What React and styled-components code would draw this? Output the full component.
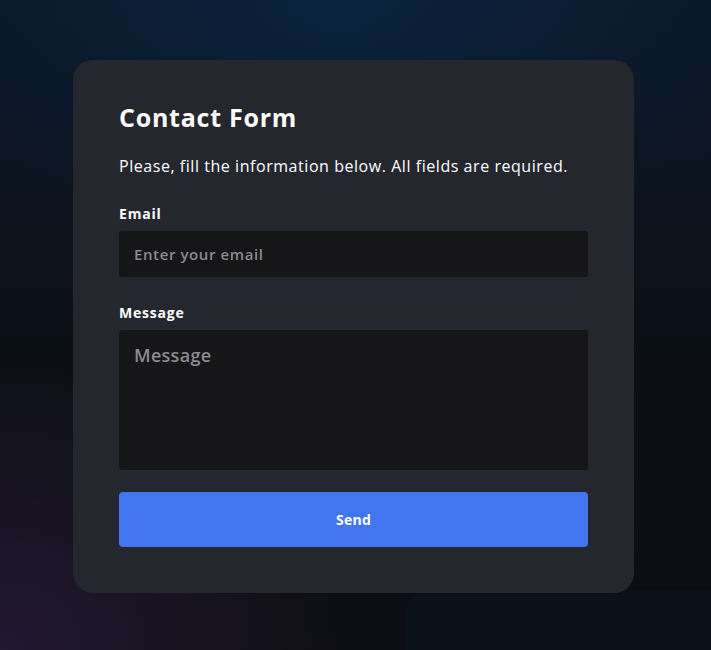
import React from "react";
import styled, { createGlobalStyle } from "styled-components";

const GlobalStyle = createGlobalStyle`
  * { box-sizing: border-box; }
  html, body { margin: 0; padding: 0; }
  body {
    font-family: "Open Sans", "Liberation Sans", sans-serif;
    background: #0c0e14;
  }
`;

const Page = styled.div`
  position: relative;
  min-height: 100vh;
  display: flex;
  align-items: center;
  justify-content: center;
  overflow: hidden;
  background:
    radial-gradient(ellipse 420px 260px at 48% 0%, #0a233d 0%, rgba(10, 35, 61, 0) 100%),
    radial-gradient(ellipse 360px 300px at 0% 100%, #221830 0%, rgba(34, 24, 48, 0) 100%),
    linear-gradient(180deg, #0b1828 0%, #0c0f16 55%, #0d0e13 100%);
`;

const Blob = styled.div`
  position: absolute;
  left: 405px;
  top: 590px;
  width: 420px;
  height: 200px;
  border-radius: 24px;
  background: #0b111a;
`;

const Card = styled.form`
  position: relative;
  width: 561px;
  margin: 3px 4px 0 0;
  padding: 42px 46px 46px;
  background: #25272e;
  border-radius: 20px;
  display: flex;
  flex-direction: column;
`;

const Title = styled.h1`
  margin: 0;
  color: #ffffff;
  font-size: 25px;
  line-height: 30px;
  font-weight: 700;
  letter-spacing: 0.75px;
`;

const Intro = styled.p`
  margin: 23px 0 0;
  color: #ffffff;
  font-size: 16px;
  line-height: 22px;
  letter-spacing: 0.55px;
`;

const Field = styled.label`
  display: flex;
  flex-direction: column;
  gap: 8px;
  margin-top: ${(p) => p.$gap}px;
`;

const Label = styled.span`
  color: #ffffff;
  font-size: 14px;
  line-height: 18px;
  font-weight: 700;
  letter-spacing: 0.8px;
`;

const inputBase = `
  width: 100%;
  border: none;
  outline: none;
  border-radius: 3px;
  background: #161618;
  color: #ffffff;
  font-family: "Open Sans", "Liberation Sans", sans-serif;
  font-weight: 600;
  &::placeholder { color: #8b8b8f; }
`;

const Input = styled.input`
  ${inputBase}
  height: 46px;
  padding: 0 15px;
  font-size: 15px;
  letter-spacing: 0.6px;
`;

const TextArea = styled.textarea`
  ${inputBase}
  height: 140px;
  padding: 13px 15px;
  font-size: 18px;
  letter-spacing: 0.3px;
  resize: none;
`;

const Button = styled.button`
  margin-top: 22px;
  height: 55px;
  border: none;
  border-radius: 4px;
  background: #4475f0;
  color: #ffffff;
  font-family: "Open Sans", "Liberation Sans", sans-serif;
  font-size: 14px;
  font-weight: 700;
  letter-spacing: 0.3px;
  cursor: pointer;
`;

export default function App() {
  return (
    <>
      <GlobalStyle />
      <Page>
        <Blob />
        <Card onSubmit={(e) => e.preventDefault()}>
          <Title>Contact Form</Title>
          <Intro>Please, fill the information below. All fields are required.</Intro>
          <Field $gap={28}>
            <Label>Email</Label>
            <Input type="email" placeholder="Enter your email" />
          </Field>
          <Field $gap={27}>
            <Label>Message</Label>
            <TextArea placeholder="Message" />
          </Field>
          <Button type="submit">Send</Button>
        </Card>
      </Page>
    </>
  );
}
